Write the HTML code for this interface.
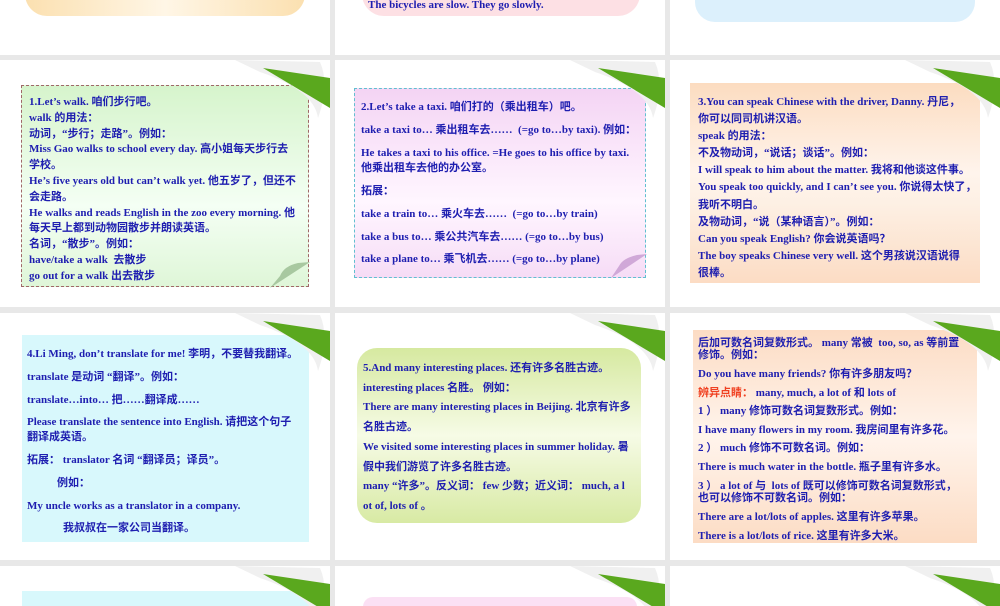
<!DOCTYPE html>
<html><head><meta charset="utf-8"><style>
*{margin:0;padding:0;box-sizing:border-box}
body{width:1000px;height:600px;background:#e8e8e8;position:relative;overflow:hidden;font-family:"Liberation Serif","Noto Sans CJK SC",serif;font-weight:bold;color:#1e1eb0;font-size:11px}
.s{position:absolute;background:#fff;overflow:hidden}
.b{position:absolute}
.t{position:absolute;white-space:nowrap;line-height:12px}
svg.c{position:absolute;right:0;top:0}
</style></head><body>
<!-- row 0 -->
<div class="s" style="left:0;top:0;width:330px;height:55px"><div class="b" style="left:25px;top:-30px;width:280px;height:46px;border-radius:0 0 22px 22px;background:linear-gradient(90deg,#fbe0b0,#fff6e6,#fbe0b0)"></div></div>
<div class="s" style="left:335px;top:0;width:330px;height:55px"><div class="b" style="left:27px;top:-30px;width:278px;height:46px;border-radius:0 0 22px 22px;background:#fde0e4"></div><div class="t" style="left:33px;top:-1px">The bicycles are slow. They go slowly.</div></div>
<div class="s" style="left:670px;top:0;width:330px;height:55px"><div class="b" style="left:25px;top:-30px;width:280px;height:52px;border-radius:0 0 20px 20px;background:#dcf0fc"></div></div>

<!-- row 1 -->
<div class="s" style="left:0;top:60px;width:330px;height:247px">
<div class="b" style="left:21px;top:25px;width:288px;height:202px;border:1px dashed #a06868;background:linear-gradient(#d6f4cc,#f4fff4 60%,#dff6d8)"></div>
<svg class="b" style="left:270px;top:202px" width="40" height="26"><path d="M0,26 L40,0 L28,1 Q14,4 10,14 Z" fill="#a8c8a0"/></svg>
<div style="position:absolute;left:29px;top:35px;line-height:15.8px">
<div>1.Let’s walk. 咱们步行吧。</div><div>walk 的用法：</div><div>动词，“步行；走路”。例如：</div><div>Miss Gao walks to school every day. 高小姐每天步行去</div><div>学校。</div><div>He’s five years old but can’t walk yet. 他五岁了，但还不</div><div>会走路。</div><div>He walks and reads English in the zoo every morning. 他</div><div>每天早上都到动物园散步并朗读英语。</div><div>名词，“散步”。例如：</div><div>have/take a walk &nbsp;去散步</div><div>go out for a walk 出去散步</div></div>
<svg class="c" width="100" height="60"><path d="M5,0 L90,2 Q100,25 88,58 Q84,30 30,12 Z" fill="#f0f0f0"/><path d="M33,8 L100,18 L100,48 Z" fill="#5aa81e"/></svg>
</div>
<div class="s" style="left:335px;top:60px;width:330px;height:247px">
<div class="b" style="left:19px;top:28px;width:292px;height:190px;border:1px dashed #60c0d0;background:linear-gradient(#f4d4f4,#fff6ff 60%,#f6dcf6)"></div>
<svg class="b" style="left:276px;top:194px" width="36" height="24"><path d="M0,24 L36,0 L26,1 Q12,4 8,12 Z" fill="#d0a8d8"/></svg>
<div style="position:absolute;left:26px;top:41px">
<div class="t" style="top:0">2.Let’s take a taxi. 咱们打的（乘出租车）吧。</div>
<div class="t" style="top:23px">take a taxi to… 乘出租车去…… &nbsp;(=go to…by taxi). 例如：</div>
<div class="t" style="top:46px">He takes a taxi to his office. =He goes to his office by taxi.</div>
<div class="t" style="top:61px">他乘出租车去他的办公室。</div>
<div class="t" style="top:84px">拓展：</div>
<div class="t" style="top:107px">take a train to… 乘火车去…… &nbsp;(=go to…by train)</div>
<div class="t" style="top:130px">take a bus to… 乘公共汽车去…… (=go to…by bus)</div>
<div class="t" style="top:152px">take a plane to… 乘飞机去…… (=go to…by plane)</div></div>
<svg class="c" width="100" height="60"><path d="M5,0 L90,2 Q100,25 88,58 Q84,30 30,12 Z" fill="#f0f0f0"/><path d="M33,8 L100,18 L100,48 Z" fill="#5aa81e"/></svg>
</div>
<div class="s" style="left:670px;top:60px;width:330px;height:247px">
<div class="b" style="left:20px;top:23px;width:290px;height:200px;background:linear-gradient(#fcdcc0,#fff4ec 45%,#fdf0e4 60%,#fcdcc4)"></div>
<div style="position:absolute;left:28px;top:34px;line-height:17.1px">
<div>3.You can speak Chinese with the driver, Danny. 丹尼，</div><div>你可以同司机讲汉语。</div><div>speak 的用法：</div><div>不及物动词，“说话；谈话”。例如：</div><div>I will speak to him about the matter. 我将和他谈这件事。</div><div>You speak too quickly, and I can’t see you. 你说得太快了，</div><div>我听不明白。</div><div>及物动词，“说（某种语言）”。例如：</div><div>Can you speak English? 你会说英语吗？</div><div>The boy speaks Chinese very well. 这个男孩说汉语说得</div><div>很棒。</div></div>
<svg class="c" width="100" height="60"><path d="M5,0 L90,2 Q100,25 88,58 Q84,30 30,12 Z" fill="#f0f0f0"/><path d="M33,8 L100,18 L100,48 Z" fill="#5aa81e"/></svg>
</div>

<!-- row 2 -->
<div class="s" style="left:0;top:313px;width:330px;height:247px">
<div class="b" style="left:22px;top:22px;width:287px;height:207px;background:#d8f8fc"></div>
<div style="position:absolute;left:27px;top:35px">
<div class="t" style="top:0">4.Li Ming, don’t translate for me! 李明，不要替我翻译。</div>
<div class="t" style="top:23px">translate 是动词 “翻译”。例如：</div>
<div class="t" style="top:46px">translate…into… 把……翻译成……</div>
<div class="t" style="top:68px">Please translate the sentence into English. 请把这个句子</div>
<div class="t" style="top:83px">翻译成英语。</div>
<div class="t" style="top:106px">拓展： translator 名词 “翻译员；译员”。</div>
<div class="t" style="top:129px;left:30px">例如：</div>
<div class="t" style="top:152px">My uncle works as a translator in a company.</div>
<div class="t" style="top:174px;left:36px">我叔叔在一家公司当翻译。</div></div>
<svg class="c" width="100" height="60"><path d="M5,0 L90,2 Q100,25 88,58 Q84,30 30,12 Z" fill="#f0f0f0"/><path d="M33,8 L100,18 L100,48 Z" fill="#5aa81e"/></svg>
</div>
<div class="s" style="left:335px;top:313px;width:330px;height:247px">
<div class="b" style="left:22px;top:35px;width:284px;height:175px;border-radius:20px;background:linear-gradient(#d6e9a0,#f6fbe6 50%,#d8eaa4)"></div>
<div style="position:absolute;left:28px;top:46px;line-height:19.7px">
<div>5.And many interesting places. 还有许多名胜古迹。</div><div>interesting places 名胜。 例如：</div><div>There are many interesting places in Beijing. 北京有许多</div><div>名胜古迹。</div><div>We visited some interesting places in summer holiday. 暑</div><div>假中我们游览了许多名胜古迹。</div><div>many “许多”。反义词： few 少数；近义词： much, a l</div><div>ot of, lots of 。</div></div>
<svg class="c" width="100" height="60"><path d="M5,0 L90,2 Q100,25 88,58 Q84,30 30,12 Z" fill="#f0f0f0"/><path d="M33,8 L100,18 L100,48 Z" fill="#5aa81e"/></svg>
</div>
<div class="s" style="left:670px;top:313px;width:330px;height:247px">
<div class="b" style="left:23px;top:17px;width:284px;height:213px;background:linear-gradient(#fcdcc4,#fff4ec 50%,#fcdcc4)"></div>
<div style="position:absolute;left:28px;top:24px">
<div class="t" style="top:0">后加可数名词复数形式。 many 常被 &nbsp;too, so, as 等前置</div>
<div class="t" style="top:12px">修饰。例如：</div>
<div class="t" style="top:31px">Do you have many friends? 你有许多朋友吗？</div>
<div class="t" style="top:50px"><span style="color:#f04020">辨异点睛：</span> many, much, a lot of 和 lots of</div>
<div class="t" style="top:68px">1 ） many 修饰可数名词复数形式。例如：</div>
<div class="t" style="top:87px">I have many flowers in my room. 我房间里有许多花。</div>
<div class="t" style="top:105px">2 ） much 修饰不可数名词。例如：</div>
<div class="t" style="top:124px">There is much water in the bottle. 瓶子里有许多水。</div>
<div class="t" style="top:143px">3 ） a lot of 与 &nbsp;lots of 既可以修饰可数名词复数形式，</div>
<div class="t" style="top:155px">也可以修饰不可数名词。例如：</div>
<div class="t" style="top:174px">There are a lot/lots of apples. 这里有许多苹果。</div>
<div class="t" style="top:193px">There is a lot/lots of rice. 这里有许多大米。</div></div>
<svg class="c" width="100" height="60"><path d="M5,0 L90,2 Q100,25 88,58 Q84,30 30,12 Z" fill="#f0f0f0"/><path d="M33,8 L100,18 L100,48 Z" fill="#5aa81e"/></svg>
</div>

<!-- row 3 -->
<div class="s" style="left:0;top:566px;width:330px;height:40px">
<div class="b" style="left:22px;top:25px;width:287px;height:20px;background:#d8f8fc"></div>
<svg class="c" width="100" height="60"><path d="M5,0 L90,2 Q100,25 88,58 Q84,30 30,12 Z" fill="#f0f0f0"/><path d="M33,8 L100,18 L100,48 Z" fill="#5aa81e"/></svg>
</div>
<div class="s" style="left:335px;top:566px;width:330px;height:40px">
<div class="b" style="left:28px;top:31px;width:274px;height:20px;border-radius:12px;background:#fbe0f4"></div>
<svg class="c" width="100" height="60"><path d="M5,0 L90,2 Q100,25 88,58 Q84,30 30,12 Z" fill="#f0f0f0"/><path d="M33,8 L100,18 L100,48 Z" fill="#5aa81e"/></svg>
</div>
<div class="s" style="left:670px;top:566px;width:330px;height:40px">
<svg class="c" width="100" height="60"><path d="M5,0 L90,2 Q100,25 88,58 Q84,30 30,12 Z" fill="#f0f0f0"/><path d="M33,8 L100,18 L100,48 Z" fill="#5aa81e"/></svg>
</div>
</body></html>
